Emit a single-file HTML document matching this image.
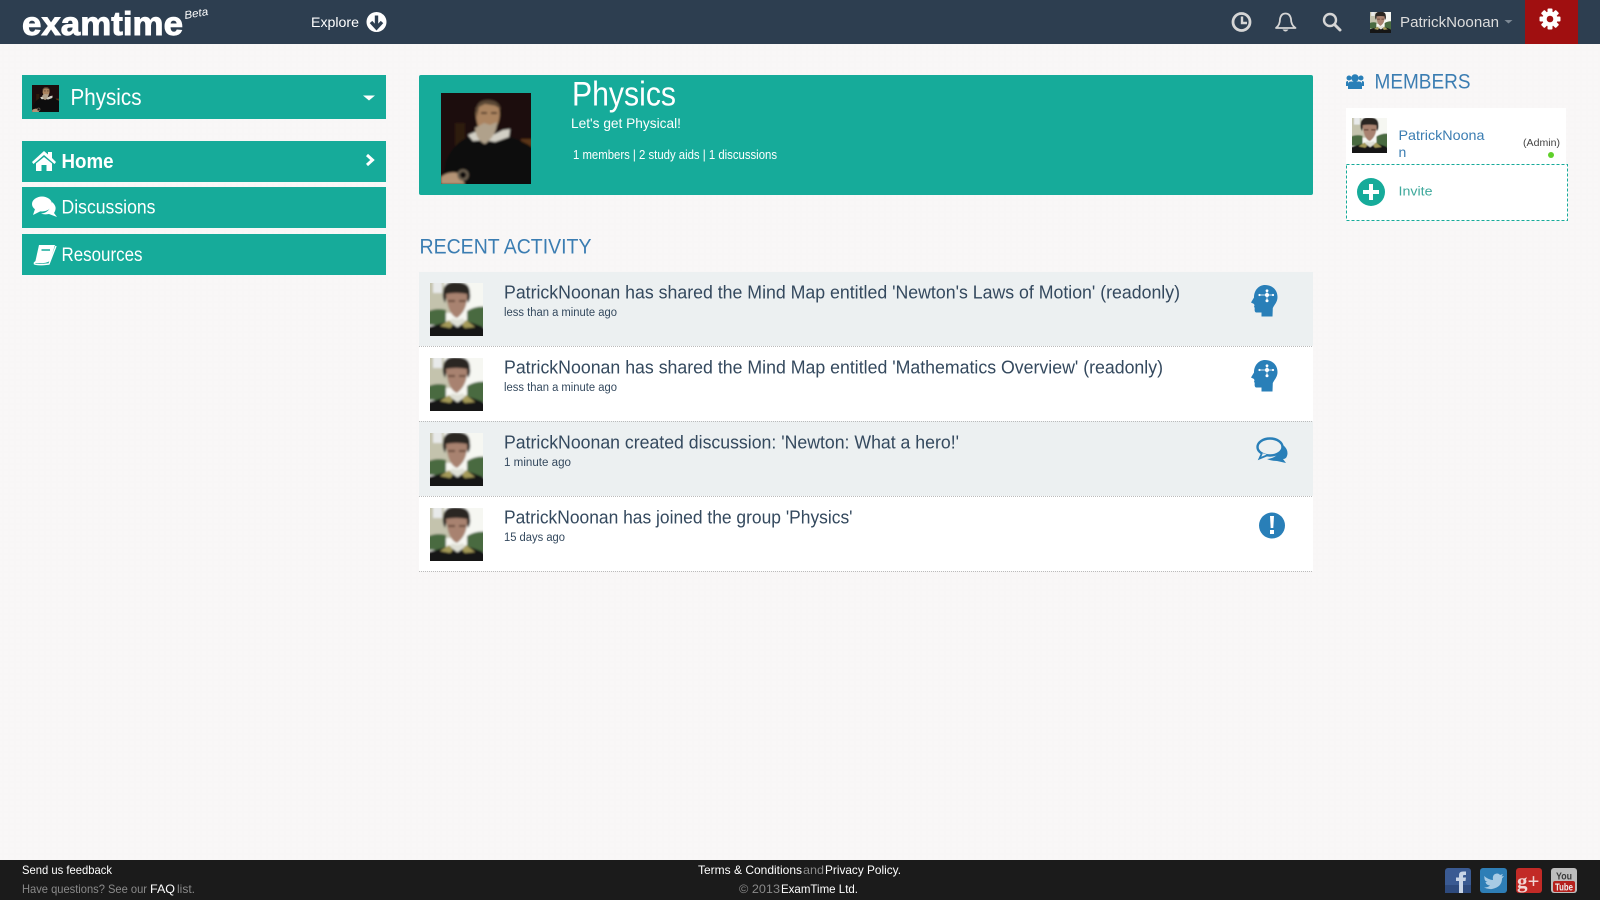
<!DOCTYPE html>
<html lang="en"><head><meta charset="utf-8"><title>Physics - ExamTime</title>
<style>
html,body{margin:0;padding:0;width:1600px;height:900px;overflow:hidden;background:#f8f6f6}
svg{display:block;position:absolute;left:0;top:0}
text{font-family:"Liberation Sans",sans-serif;white-space:pre}
</style></head><body>
<svg width="1600" height="900" viewBox="0 0 1600 900" xmlns="http://www.w3.org/2000/svg">
<defs>
<pattern id="linen" width="6" height="6" patternUnits="userSpaceOnUse"><rect width="6" height="6" fill="#f9f7f7"/><path d="M0 2H6M3 0V6" stroke="#f7f5f5" stroke-width="1"/></pattern>
<filter id="b1" x="-10%" y="-10%" width="120%" height="120%"><feGaussianBlur stdDeviation="1"/></filter>
<symbol id="man" viewBox="0 0 53 53">
<g filter="url(#b1)">
<rect x="-6" y="-6" width="65" height="65" fill="#f6f7f2"/>
<path d="M-6 -6H14V4H22V30H-6Z" fill="#c4c3ad"/><rect x="3" y="-4" width="9" height="14" fill="#e8eaea"/>
<path d="M-6 30Q6 24 16 27L16 42H-6ZM37 28Q46 22 59 24V44H37Z" fill="#4a6b40"/>
<path d="M-6 45Q10 41 20 38L34 38Q46 40 59 47V59H-6Z" fill="#141413"/>
<path d="M13 9Q14 -2 27 -1Q40 -1 40 10Q41 16 38 20L36 12L17 12L15 20Q12 15 13 9Z" fill="#2a2624"/>
<path d="M16 11Q26 9 37 11Q38 27 27 35Q18 32 16 11Z" fill="#a88270"/>
<path d="M18 18H25M29 18H36" stroke="#5f4133" stroke-width="1.800"/>
<path d="M22 35Q27 38 33 35L35 39L28 44H27L20 39Z" fill="#dfe0d6"/>
<path d="M10 43L19 37L23 42L20 45ZM45 44L36 37L32 42L35 45Z" fill="#a49a58"/>
</g></symbol>
<symbol id="gal" viewBox="0 0 90 91">
<g filter="url(#b1)">
<rect x="-6" y="-6" width="102" height="103" fill="#1b0f09"/>
<rect x="14" y="30" width="10" height="24" fill="#2e1c0e"/><rect x="80" y="46" width="14" height="24" fill="#5a3518"/>
<path d="M0 97L5 68Q13 50 27 44L60 42Q82 46 96 58V97Z" fill="#0a0807"/>
<path d="M27 42L36 38L44 44L54 41L62 37L69 36L68 44L54 49L44 47L32 48Z" fill="#d3d0c6"/>
<path d="M35 15Q46 6 58 15Q60 26 55 34L38 36Q34 25 35 15Z" fill="#ab8460"/>
<path d="M35 17Q36 7 47 7Q58 7 60 17L56 13L44 11L38 14L36 24Z" fill="#5a4636"/>
<path d="M40 20H46M50 20H56" stroke="#4a3220" stroke-width="1.800"/>
<path d="M34 35L43 30L49 32L56 29Q56 42 44 51Q35 47 34 35Z" fill="#b0a18b"/>
<path d="M0 84Q7 78 17 80L24 91H0Z" fill="#b59476"/>
<circle cx="22" cy="82" r="4.500" fill="none" stroke="#6a5e50" stroke-width="2.500"/>
</g></symbol>
<symbol id="headi" viewBox="0 0 27 32">
<path d="M14 0C21.500 0 26.500 5 26.500 12C26.500 17 23.500 19.500 21.800 23L21.500 31.500L10.500 31.500L10.500 27.500L6 27.500C3.500 27.500 3.500 25.500 3.700 23L3 21.500C4 20.500 3 19.500 3 19L0 17.500L3 12.500C3 5 8 0 14 0Z" fill="#297fb8"/>
<path d="M16 6V16M9 10H22" stroke="#fff" stroke-width=".7"/>
<circle cx="16" cy="10" r="2" fill="#fff"/><circle cx="16" cy="5.800" r="1.400" fill="#fff"/><circle cx="16" cy="15.800" r="1.500" fill="#fff"/><circle cx="8.500" cy="10" r="1.100" fill="#fff"/><circle cx="22" cy="10" r="1.100" fill="#fff"/>
</symbol>
</defs>

<rect width="1600" height="900" fill="url(#linen)"/>

<!-- top bar -->
<rect width="1600" height="44" fill="#2d3e50"/>
<text x="22" y="35" font-size="33" font-weight="bold" fill="#fff" stroke="#fff" stroke-width=".9" textLength="161" lengthAdjust="spacingAndGlyphs">examtime</text>
<text x="185" y="19" font-size="11" font-style="italic" fill="#fff" textLength="24" lengthAdjust="spacingAndGlyphs" transform="rotate(-10 185 19)">Beta</text>
<text x="311" y="27" font-size="14" fill="#fff" textLength="48" lengthAdjust="spacingAndGlyphs">Explore</text>
<circle cx="376.500" cy="22" r="10" fill="#fff"/>
<path d="M376.500 15.500V27M371 22L376.500 28L382 22" fill="none" stroke="#2d3e50" stroke-width="3.400"/>

<circle cx="1241.500" cy="22" r="8.500" fill="none" stroke="#d5d5d5" stroke-width="2.800"/>
<path d="M1242 16.500V23H1247" fill="none" stroke="#d5d5d5" stroke-width="2.400"/>
<path d="M1276 28Q1280 25 1280 19Q1281 13.500 1285.500 13.500Q1290 13.500 1291 19Q1291 25 1295.500 28Z" fill="none" stroke="#d5d5d5" stroke-width="1.800" stroke-linejoin="round"/>
<path d="M1282.500 29.500Q1285.500 33.500 1288.500 29.500Z" fill="#d5d5d5"/>
<circle cx="1330" cy="20" r="6" fill="none" stroke="#d5d5d5" stroke-width="2.400"/>
<path d="M1334.500 24.500L1340 30" stroke="#d5d5d5" stroke-width="3" stroke-linecap="round"/>
<use href="#man" x="1370" y="12" width="21" height="21"/>
<text x="1400" y="27" font-size="15" fill="#dcdcdc" textLength="99" lengthAdjust="spacingAndGlyphs">PatrickNoonan</text>
<path d="M1504.500 20H1512.500L1508.500 23.500Z" fill="#7d8995"/>
<rect x="1525" width="53" height="44" fill="#a00f10"/>
<g transform="translate(1550 19)" fill="#fff">
<circle r="7.500"/>
<g><rect x="-2.500" y="-10.500" width="5" height="21" rx="1"/><rect x="-2.500" y="-10.500" width="5" height="21" rx="1" transform="rotate(45)"/><rect x="-2.500" y="-10.500" width="5" height="21" rx="1" transform="rotate(90)"/><rect x="-2.500" y="-10.500" width="5" height="21" rx="1" transform="rotate(135)"/></g>
<circle r="3.300" fill="#a00f10"/>
</g>

<!-- left column -->
<rect x="22" y="75" width="364" height="44" fill="#16ab9a"/>
<use href="#gal" x="32" y="85" width="27" height="27"/>
<text x="70.500" y="105" font-size="23" fill="#fff" textLength="71" lengthAdjust="spacingAndGlyphs">Physics</text>
<path d="M363 95.500H375L369 100.500Z" fill="#fff"/>

<rect x="22" y="141" width="364" height="41" fill="#16ab9a"/>
<path d="M32 162L44 151L48 154.500V152H52V158L56 162L54.500 164L44 155L33.500 164Z" fill="#fff"/>
<path d="M36 163.500L44 157L52 163.500V171H46.500V165H41.500V171H36Z" fill="#fff"/>
<text x="61.500" y="168" font-size="20" font-weight="bold" fill="#fff" textLength="52" lengthAdjust="spacingAndGlyphs">Home</text>
<path d="M367 155L372.500 160L367 165" fill="none" stroke="#fff" stroke-width="3"/>

<rect x="22" y="187" width="364" height="41" fill="#16ab9a"/>
<ellipse cx="42" cy="204" rx="10" ry="7.500" fill="#fff"/>
<path d="M35 209L33 215L41 211Z" fill="#fff"/>
<path d="M52 202Q58 207 54 213L57 217L49 214Q44 215 41 213.500Q50 213 52 202Z" fill="#fff"/>
<text x="61.500" y="213.500" font-size="19.500" fill="#fff" textLength="94" lengthAdjust="spacingAndGlyphs">Discussions</text>

<rect x="22" y="234" width="364" height="41" fill="#16ab9a"/>
<path d="M39 245H55L50 261Q45 264 35 263Z" fill="#fff"/>
<path d="M34 263.500Q37 259 50 259M34 263.500Q36 265.500 49 264L56 246" fill="none" stroke="#fff" stroke-width="1.400"/>
<path d="M41.500 250H50" stroke="#16ab9a" stroke-width="1.500"/>
<text x="61.500" y="261" font-size="19.500" fill="#fff" textLength="81" lengthAdjust="spacingAndGlyphs">Resources</text>

<!-- header -->
<rect x="419" y="75" width="894" height="120" rx="2" fill="#16ab9a"/>
<use href="#gal" x="441" y="93" width="90" height="91"/>
<text x="572" y="105.500" font-size="34" fill="#fff" textLength="104" lengthAdjust="spacingAndGlyphs">Physics</text>
<text x="571" y="128" font-size="14" fill="#fff" textLength="110" lengthAdjust="spacingAndGlyphs">Let's get Physical!</text>
<text x="573" y="159" font-size="12.500" fill="#fff" textLength="204" lengthAdjust="spacingAndGlyphs">1 members | 2 study aids | 1 discussions</text>

<text x="419.500" y="253.500" font-size="21" fill="#3b7db2" textLength="172" lengthAdjust="spacingAndGlyphs">RECENT ACTIVITY</text>

<!-- rows -->
<rect x="419" y="272" width="894" height="74" fill="#ecf0f1"/>
<rect x="419" y="346" width="894" height="75" fill="#fff"/>
<rect x="419" y="421" width="894" height="75" fill="#ecf0f1"/>
<rect x="419" y="496" width="894" height="75" fill="#fff"/>
<path d="M419 346.500H1313M419 421.500H1313M419 496.500H1313M419 571.500H1313" stroke="#bbb" stroke-width="1" stroke-dasharray="1 1"/>

<use href="#man" x="430" y="283" width="53" height="53"/>
<use href="#man" x="430" y="358" width="53" height="53"/>
<use href="#man" x="430" y="433" width="53" height="53"/>
<use href="#man" x="430" y="508" width="53" height="53"/>

<g fill="#34495e">
<text x="504" y="298.500" font-size="18" textLength="676" lengthAdjust="spacingAndGlyphs">PatrickNoonan has shared the Mind Map entitled 'Newton's Laws of Motion' (readonly)</text>
<text x="504" y="373.500" font-size="18" textLength="659" lengthAdjust="spacingAndGlyphs">PatrickNoonan has shared the Mind Map entitled 'Mathematics Overview' (readonly)</text>
<text x="504" y="448.500" font-size="18" textLength="455" lengthAdjust="spacingAndGlyphs">PatrickNoonan created discussion: 'Newton: What a hero!'</text>
<text x="504" y="523.500" font-size="18" textLength="348.500" lengthAdjust="spacingAndGlyphs">PatrickNoonan has joined the group 'Physics'</text>
<text x="504" y="316" font-size="11.500" textLength="113" lengthAdjust="spacingAndGlyphs">less than a minute ago</text>
<text x="504" y="391" font-size="11.500" textLength="113" lengthAdjust="spacingAndGlyphs">less than a minute ago</text>
<text x="504" y="466" font-size="11.500" textLength="67" lengthAdjust="spacingAndGlyphs">1 minute ago</text>
<text x="504" y="541" font-size="11.500" textLength="61" lengthAdjust="spacingAndGlyphs">15 days ago</text>
</g>

<use href="#headi" x="1251" y="285" width="27" height="32"/>
<use href="#headi" x="1251" y="360" width="27" height="32"/>
<ellipse cx="1270" cy="447" rx="12.500" ry="8.500" fill="none" stroke="#297fb8" stroke-width="2.400"/>
<path d="M1262 453L1259.500 458.500L1268 455" fill="#ecf0f1" stroke="#297fb8" stroke-width="1.800"/>
<path d="M1283 445Q1289 450 1287 456Q1286 459 1283 459L1286 463L1277 461Q1271 461 1267 459Q1279 458 1283 445Z" fill="#297fb8"/>
<circle cx="1272" cy="525.500" r="13" fill="#297fb8"/>
<path d="M1270 516H1274L1273.300 528H1270.700Z" fill="#fff"/><rect x="1270" y="530" width="4" height="4" fill="#fff"/>

<!-- right column -->
<g fill="#297fb8">
<circle cx="1355" cy="78" r="3.800"/><circle cx="1349" cy="78" r="2.500"/><circle cx="1361" cy="78" r="2.500"/>
<path d="M1348 89V84Q1348 81.500 1351 81.500H1359Q1362 81.500 1362 84V89Z"/>
<path d="M1346 86V82.500Q1346 81 1348 81V86ZM1364 86V82.500Q1364 81 1362 81V86Z"/>
</g>
<text x="1374.500" y="88.500" font-size="21" fill="#3b7db2" textLength="96" lengthAdjust="spacingAndGlyphs">MEMBERS</text>
<rect x="1346" y="108" width="220" height="56" fill="#fff"/>
<use href="#man" x="1352" y="118" width="35" height="35"/>
<text x="1398.500" y="140" font-size="14" fill="#3b7db2" textLength="86" lengthAdjust="spacingAndGlyphs">PatrickNoona</text>
<text x="1398.500" y="157" font-size="14" fill="#3b7db2">n</text>
<text x="1523" y="146" font-size="10.500" fill="#444" textLength="37" lengthAdjust="spacingAndGlyphs">(Admin)</text>
<circle cx="1551" cy="155" r="3" fill="#5fd02a"/>
<rect x="1346.500" y="164.500" width="221" height="56" fill="#fff" stroke="#16ab9a" stroke-width="1" stroke-dasharray="3 2"/>
<circle cx="1371" cy="192" r="14" fill="#16ab9a"/>
<path d="M1371 184V200M1363 192H1379" stroke="#fff" stroke-width="4"/>
<text x="1398.500" y="195.500" font-size="13" fill="#3fa99c" textLength="34" lengthAdjust="spacingAndGlyphs">Invite</text>

<!-- footer -->
<rect y="860" width="1600" height="40" fill="#1b1b1b"/>
<text x="22" y="874" font-size="12" fill="#fff" textLength="90" lengthAdjust="spacingAndGlyphs">Send us feedback</text>
<text x="22" y="893" font-size="12" fill="#8a8a8a" textLength="125" lengthAdjust="spacingAndGlyphs">Have questions? See our</text>
<text x="150" y="893" font-size="12" fill="#fff" textLength="25" lengthAdjust="spacingAndGlyphs">FAQ</text>
<text x="177" y="893" font-size="12" fill="#8a8a8a" textLength="18" lengthAdjust="spacingAndGlyphs">list.</text>
<text x="698" y="874" font-size="12" fill="#fff" textLength="104" lengthAdjust="spacingAndGlyphs">Terms &amp; Conditions</text>
<text x="803" y="874" font-size="12" fill="#8a8a8a" textLength="21" lengthAdjust="spacingAndGlyphs">and</text>
<text x="825" y="874" font-size="12" fill="#fff" textLength="76" lengthAdjust="spacingAndGlyphs">Privacy Policy.</text>
<text x="739" y="893" font-size="12" fill="#8a8a8a" textLength="41" lengthAdjust="spacingAndGlyphs">© 2013</text>
<text x="781" y="893" font-size="12" fill="#fff" textLength="77" lengthAdjust="spacingAndGlyphs">ExamTime Ltd.</text>

<!-- social -->
<rect x="1445" y="868" width="26" height="25" rx="3" fill="#3a5a92"/>
<rect x="1445" y="885" width="26" height="8" fill="#2e4a7d"/>
<path d="M1459 893V881H1456V877.500H1459V875Q1459 871.500 1463 871.500H1466V875H1464Q1463 875 1463 876V877.500H1466L1465.500 881H1463V893Z" fill="#c8d4e6"/>
<rect x="1480" y="868" width="27" height="25" rx="3" fill="#2e7eb6"/>
<path d="M1484 876Q1489 880 1493 880Q1492 874 1497 873.500Q1499 873.500 1500 875L1503 874L1501.500 876.500L1504 876L1502 878.500Q1502 887 1492 889Q1488 889.500 1484 887.500Q1488 887.500 1490 885.500Q1486 885 1485.500 882L1487.500 882Q1484 880.500 1484.500 878Z" fill="#a8cbe4"/>
<rect x="1516" y="868" width="26" height="25" rx="3" fill="#c22a26"/>
<text x="1517" y="888" font-size="21" font-weight="bold" fill="#f1d6d4" style="font-family:'Liberation Serif',serif">g+</text>
<rect x="1551" y="868" width="26" height="25" rx="3" fill="#bdbdbd"/>
<rect x="1553" y="881" width="22" height="11" rx="2" fill="#b5201c"/>
<text x="1556" y="879.500" font-size="10" font-weight="bold" fill="#3a3a3a" textLength="16" lengthAdjust="spacingAndGlyphs">You</text>
<text x="1555" y="890.500" font-size="10" font-weight="bold" fill="#eee" textLength="18" lengthAdjust="spacingAndGlyphs">Tube</text>
</svg>
</body></html>
